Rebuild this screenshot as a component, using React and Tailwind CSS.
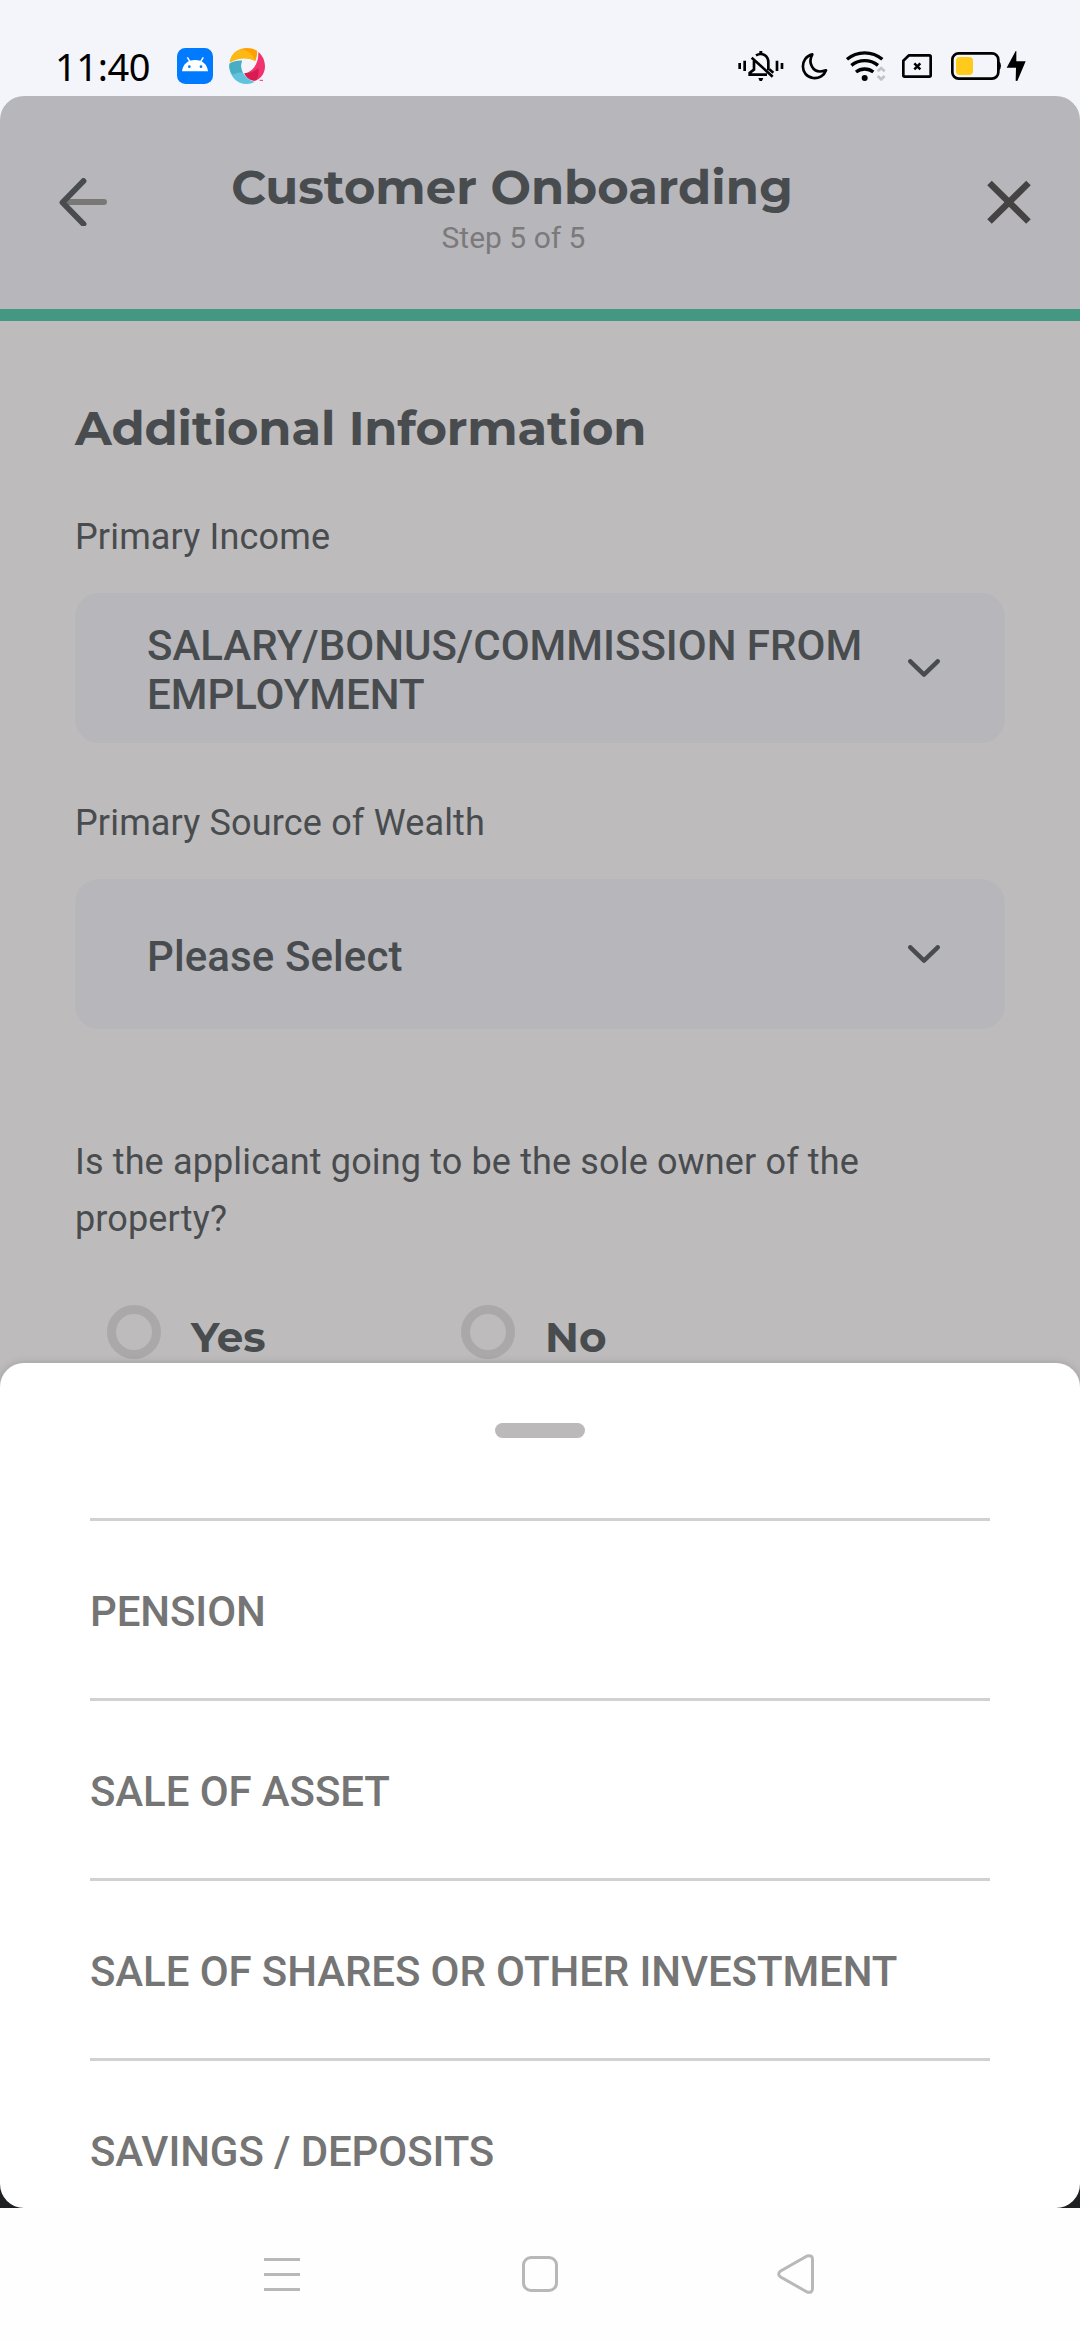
import React from "react";

const OPTIONS = ["PENSION", "SALE OF ASSET", "SALE OF SHARES OR OTHER INVESTMENT", "SAVINGS / DEPOSITS"];

function AndroidBadge() {
  return (
    <svg className="ml-[27px] h-9 w-9" viewBox="0 0 108 108">
      <rect width="108" height="108" rx="25" fill="#007bff" />
      <path d="M15 70C17 50 31 36 54 36s37 14 39 34Z" fill="#fff" />
      <path d="M31 28l8 13M79 28l-8 13" stroke="#fff" strokeWidth="4.5" fill="none" />
      <circle cx="37" cy="56" r="4" fill="#007bff" />
      <circle cx="72" cy="56" r="4" fill="#007bff" />
    </svg>
  );
}

function PinwheelBadge() {
  return (
    <svg className="ml-4 h-9 w-9" viewBox="0 0 108 108">
      <path d="M2 43C6 16 28 0 54 0c12 0 22 3 30 8 1 11-1 22-5 31C61 29 34 25 2 43Z" fill="#ffa000" />
      <path d="M2 43C8 18 22 7 38 4c20 4 34 17 41 35C61 29 34 25 2 43Z" fill="#fdb913" />
      <path d="M88 12c12 10 20 25 20 42 0 20-10 36-26 43-14 2-27-6-36-20 20-3 44-25 42-65Z" fill="#f0336f" />
      <path d="M46 75c15 2 31-4 42-15 3 14 0 27-6 37-14 4-30-6-36-22Z" fill="#d81b50" />
      <path d="M0 50c11-8 25-12 39-12-8 22 2 51 38 64-7 4-15 6-24 6C24 108 0 84 0 50Z" fill="#5fc3de" />
      <path d="M2 46c11-6 25-9 37-8-5 12-4 25 2 36-18-2-30 7-30 7C4 72-1 58 2 46Z" fill="#4aaec2" />
      <path d="M92 97h10" stroke="#f0336f" strokeWidth="3" />
    </svg>
  );
}

function MutedBell() {
  return (
    <svg className="h-[30px] w-[46px]" viewBox="56 93 138 90" fill="none" stroke="#000">
      <path d="M61 129v18M76 122v31M173 122v31M188 129v18" strokeWidth="8" />
      <path d="M110 106c20-11 37 3 37 21v24M104 122v27l-13 10v5h52" strokeWidth="8" />
      <path d="M97 113l63 57" strokeWidth="8" />
      <path d="M150 148l12 10" strokeWidth="8" />
      <path d="M120 93h9v8h-9zM117 174h15l-4 9h-7z" fill="#000" stroke="none" />
    </svg>
  );
}

function Moon() {
  return (
    <svg className="ml-[17px] h-[30px] w-[27px]" viewBox="244 93 81 90" fill="none" stroke="#000" strokeWidth="8" strokeLinejoin="round">
      <path d="M278 103c-38 9-38 65 2 71 18 2 34-8 39-23-20 7-35 2-42-11-7-12-5-26 1-37Z" />
    </svg>
  );
}

function Wifi() {
  return (
    <svg className="ml-[18px] h-[30px] w-[40px]" viewBox="379 93 120 90" fill="none" stroke="#000" strokeWidth="10">
      <path d="M382 118c30-26 76-26 106 0M395 136c24-19 56-19 80 0M409 156c15-12 37-12 52 0" />
      <circle cx="435" cy="174" r="9" fill="#000" stroke="none" />
      <path d="M474 154l10.500-10 10.500 10M474 168l10.500 10 10.500-10" stroke="#c2c3c8" strokeWidth="8" />
    </svg>
  );
}

function Sim() {
  return (
    <svg className="ml-[16px] h-[30px] w-[30px]" viewBox="546 93 90 90" fill="none" stroke="#000" strokeWidth="8">
      <path d="M567 106h61q4 0 4 4v56q0 4-4 4h-74q-4 0-4-4v-44Z" strokeLinejoin="round" />
      <path d="M583 130l18 18M601 130l-18 18" strokeWidth="7.500" />
    </svg>
  );
}

function Battery() {
  return (
    <svg className="ml-[19px] h-[30px] w-[76px]" viewBox="693 93 228 90">
      <rect x="697" y="100" width="138" height="76" rx="19" fill="none" stroke="#000" strokeWidth="8" />
      <rect x="708" y="111" width="51" height="54" rx="11" fill="#ffca1c" />
      <path d="M836 122q7 6 7 15t-7 15Z" fill="#000" />
      <path d="M887 93l-27 50h28l-1 39 5 1 25-59h-28V93Z" fill="#000" />
    </svg>
  );
}

function StatusBar() {
  return (
    <div className="flex h-24 items-start pl-[55px] pt-12">
      <div className="flex h-9 w-[95px] items-center whitespace-nowrap font-['Noto_Sans',sans-serif] text-[38px] leading-[38px] tracking-[-0.4px] text-black">11:40</div>
      <AndroidBadge />
      <PinwheelBadge />
      <div className="ml-auto mr-[53px] mt-[3px] flex items-center">
        <MutedBell />
        <Moon />
        <Wifi />
        <Sim />
        <Battery />
      </div>
    </div>
  );
}

function Header() {
  return (
    <header className="flex h-[213px] items-start rounded-t-3xl bg-[#b7b6bb]">
      <button className="w-[131px] pl-[59px] pt-[82px]">
        <svg className="h-12 w-12" viewBox="0 0 48 48" fill="none" strokeWidth="6" strokeLinecap="round" strokeLinejoin="round">
          <path d="M8 24h37" stroke="#7a7777" />
          <path d="M24.500 3L3.500 24.500 24.500 46" stroke="#484c4f" strokeWidth="5.800" />
        </svg>
      </button>
      <div className="flex flex-1 flex-col items-center gap-1 pt-[62px]">
        <h1 className="whitespace-nowrap font-['Montserrat','Inter',sans-serif] text-5xl font-bold leading-[58px] text-[#484c4f]">Customer Onboarding</h1>
        <p className="pl-[3px] text-3xl leading-[35px] text-[#7b7a7a]">Step 5 of 5</p>
      </div>
      <button className="w-[187px] pl-[94px] pt-[84px]">
        <svg className="h-11 w-11" viewBox="0 0 44 44" fill="none" stroke="#444243" strokeWidth="6.500">
          <path d="M2.500 3L41.500 41.500M41.500 3L2.500 41.500" />
        </svg>
      </button>
    </header>
  );
}

function Select({ children }) {
  return (
    <div className="mt-[35px] flex h-[150px] items-center rounded-3xl bg-[#b7b6bb] pl-[72px] pr-[65px] text-[#484c4f]">
      <div className="flex-1 whitespace-nowrap pt-1 text-[42px] font-medium leading-[49px]">{children}</div>
      <svg className="h-[18px] w-8" viewBox="0 0 32 18" fill="none" stroke="currentColor" strokeWidth="4.400" strokeLinecap="round" strokeLinejoin="round">
        <path d="M2.300 2.300L16 15.600 29.700 2.300" />
      </svg>
    </div>
  );
}

function Radio({ label }) {
  return (
    <div className="flex w-[354px] items-start">
      <span className="h-[54px] w-[54px] rounded-full border-[9px] border-[#aaa8a8]" />
      <span className="ml-[30px] mt-[7px] font-['Montserrat','Inter',sans-serif] text-[42px] font-bold leading-[51px]">{label}</span>
    </div>
  );
}

function Sheet() {
  return (
    <div className="absolute inset-x-0 top-[1363px] h-[845px] overflow-hidden rounded-3xl bg-white px-[90px] pt-[60px]">
      <div className="mx-auto h-[15px] w-[90px] rounded-lg bg-[#bbb9b9]" />
      <ul className="mt-20">
        {OPTIONS.map((o) => (
          <li key={o} className="h-[180px] whitespace-nowrap border-t-[3px] border-[#d1d1d1] pt-[66px] text-[42px] font-medium leading-[49px] tracking-[-0.1px] text-[#757575]">
            {o}
          </li>
        ))}
      </ul>
    </div>
  );
}

function NavBar() {
  return (
    <nav className="flex h-[132px] items-start bg-[#fefefe] pl-[264px] pt-[46px]">
      <svg className="h-10 w-9" viewBox="0 0 36 40" stroke="#b8b8b8" strokeWidth="3">
        <path d="M0 5.500h36M0 20.500h36M0 35.500h36" />
      </svg>
      <svg className="ml-[222px] h-10 w-9" viewBox="0 0 36 40" fill="none" stroke="#b8b8b8" strokeWidth="3">
        <rect x="1.500" y="3.500" width="33" height="33" rx="7.500" />
      </svg>
      <svg className="ml-[219px] h-10 w-[37px]" viewBox="0 0 37 40" fill="none" stroke="#b8b8b8" strokeWidth="3">
        <path d="M3.200 17.300Q0.200 20 3.200 22.700L30 38Q35.500 39.500 35.500 34.500V5.500Q35.500 0.500 30 2Z" strokeLinejoin="round" />
      </svg>
    </nav>
  );
}

export default function App() {
  return (
    <div className="relative flex h-[2340px] w-[1080px] flex-col overflow-hidden bg-[#f4f5fb] font-['Roboto',sans-serif]">
      <StatusBar />
      <div className="flex flex-1 flex-col">
        <Header />
        <div className="h-3 bg-[#439783]" />
        <main className="h-[1500px] bg-[#bdbbbb] px-[75px] pt-[78px] text-[#484c4f]">
          <h2 className="font-['Montserrat','Inter',sans-serif] text-5xl font-bold leading-[58px] tracking-[-0.12px]">Additional Information</h2>
          <p className="mt-[59px] text-4xl leading-[42px] tracking-[0.16px]">Primary Income</p>
          <Select>
            SALARY/BONUS/COMMISSION FROM
            <br />
            EMPLOYMENT
          </Select>
          <p className="mt-[59px] text-4xl leading-[42px] tracking-[0.16px]">Primary Source of Wealth</p>
          <Select>
            <span className="tracking-[0.1px]">Please Select</span>
          </Select>
          <p className="mt-[105px] text-4xl leading-[57px] tracking-[0.14px]">
            Is the applicant going to be the sole owner of the
            <br />
            property?
          </p>
          <div className="mt-[57px] flex pl-8">
            <Radio label="Yes" />
            <Radio label="No" />
          </div>
        </main>
        <div className="flex-1 bg-[#1e2022]" />
      </div>
      <div className="absolute inset-x-0 top-[1363px] h-[400px] rounded-3xl shadow-[0_0_8px_rgba(0,0,0,0.16)]" />
      <Sheet />
      <NavBar />
    </div>
  );
}
